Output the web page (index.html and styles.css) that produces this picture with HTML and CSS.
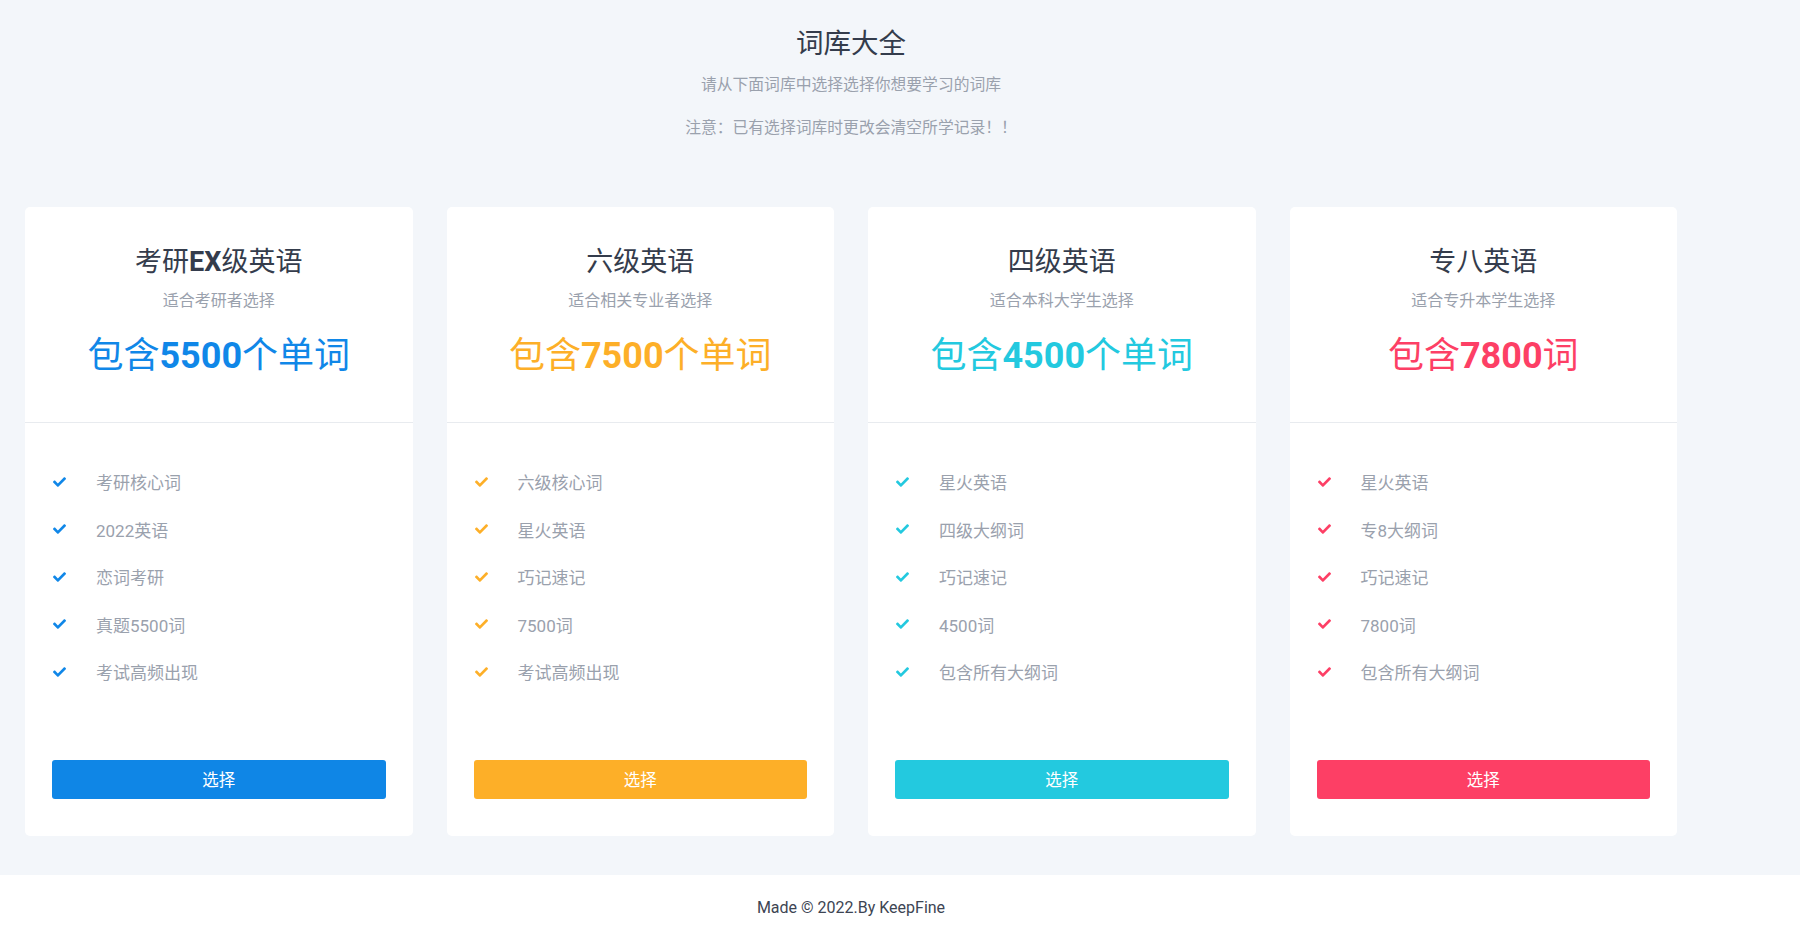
FILE: index.html
```html
<!DOCTYPE html>
<html lang="zh-CN">
<head>
<meta charset="utf-8">
<title>词库大全</title>
<link rel="stylesheet" href="styles.css">
</head>
<body>
<svg width="0" height="0" class="defs" aria-hidden="true">
  <symbol id="chk" viewBox="0 60 512 392">
    <path d="M173.9 439.4l-166.4-166.4c-10-10-10-26.2 0-36.2l36.2-36.2c10-10 26.2-10 36.2 0L192 312.7 432.1 72.6c10-10 26.2-10 36.2 0l36.2 36.2c10 10 10 26.2 0 36.2l-294.4 294.4c-10 10-26.2 10-36.2 0z"/>
  </symbol>
</svg>
<main class="main">
  <div class="wrap">
    <header class="head">
      <h1 class="head-title">词库大全</h1>
      <p class="head-sub">请从下面词库中选择选择你想要学习的词库</p>
      <p class="head-note">注意：已有选择词库时更改会清空所学记录！！</p>
    </header>
    <section class="cards">
      <div class="card blue">
        <div class="card-head">
          <h2 class="card-title">考研<span class="lat">EX</span>级英语</h2>
          <p class="card-sub">适合考研者选择</p>
          <p class="card-price">包含<span class="lat">5500</span>个单词</p>
        </div>
        <div class="card-body">
          <ul class="list">
            <li><svg class="ic"><use href="#chk"/></svg>考研核心词</li>
            <li><svg class="ic"><use href="#chk"/></svg>2022英语</li>
            <li><svg class="ic"><use href="#chk"/></svg>恋词考研</li>
            <li><svg class="ic"><use href="#chk"/></svg>真题5500词</li>
            <li><svg class="ic"><use href="#chk"/></svg>考试高频出现</li>
          </ul>
          <button class="btn">选择</button>
        </div>
      </div>
      <div class="card orange">
        <div class="card-head">
          <h2 class="card-title">六级英语</h2>
          <p class="card-sub">适合相关专业者选择</p>
          <p class="card-price">包含<span class="lat">7500</span>个单词</p>
        </div>
        <div class="card-body">
          <ul class="list">
            <li><svg class="ic"><use href="#chk"/></svg>六级核心词</li>
            <li><svg class="ic"><use href="#chk"/></svg>星火英语</li>
            <li><svg class="ic"><use href="#chk"/></svg>巧记速记</li>
            <li><svg class="ic"><use href="#chk"/></svg>7500词</li>
            <li><svg class="ic"><use href="#chk"/></svg>考试高频出现</li>
          </ul>
          <button class="btn">选择</button>
        </div>
      </div>
      <div class="card cyan">
        <div class="card-head">
          <h2 class="card-title">四级英语</h2>
          <p class="card-sub">适合本科大学生选择</p>
          <p class="card-price">包含<span class="lat">4500</span>个单词</p>
        </div>
        <div class="card-body">
          <ul class="list">
            <li><svg class="ic"><use href="#chk"/></svg>星火英语</li>
            <li><svg class="ic"><use href="#chk"/></svg>四级大纲词</li>
            <li><svg class="ic"><use href="#chk"/></svg>巧记速记</li>
            <li><svg class="ic"><use href="#chk"/></svg>4500词</li>
            <li><svg class="ic"><use href="#chk"/></svg>包含所有大纲词</li>
          </ul>
          <button class="btn">选择</button>
        </div>
      </div>
      <div class="card red">
        <div class="card-head">
          <h2 class="card-title">专八英语</h2>
          <p class="card-sub">适合专升本学生选择</p>
          <p class="card-price">包含<span class="lat">7800</span>词</p>
        </div>
        <div class="card-body">
          <ul class="list">
            <li><svg class="ic"><use href="#chk"/></svg>星火英语</li>
            <li><svg class="ic"><use href="#chk"/></svg>专8大纲词</li>
            <li><svg class="ic"><use href="#chk"/></svg>巧记速记</li>
            <li><svg class="ic"><use href="#chk"/></svg>7800词</li>
            <li><svg class="ic"><use href="#chk"/></svg>包含所有大纲词</li>
          </ul>
          <button class="btn">选择</button>
        </div>
      </div>
    </section>
  </div>
</main>
<footer class="foot">
  <div class="foot-in">Made © 2022.By KeepFine</div>
</footer>
</body>
</html>
```

FILE: styles.css
```css
* { box-sizing: border-box; }
html, body { margin: 0; padding: 0; }
body {
  font-family: "Roboto", "Noto Sans CJK SC", sans-serif;
  background: #ffffff;
  color: #343c4c;
}
.defs { position: absolute; width: 0; height: 0; overflow: hidden; }

.main {
  background: #f3f6fa;
  padding-bottom: 39px;
}
.wrap {
  width: 1652px;
  margin-left: 25px;
}

.head {
  padding-top: 26px;
  text-align: center;
}
.head-title {
  margin: 0;
  font-size: 27.5px;
  line-height: 36px;
  font-weight: 400;
  color: #343c4c;
}
.head-sub {
  margin: 11px 0 0;
  font-size: 15.8px;
  line-height: 24px;
  color: #9aa1ad;
}
.head-note {
  margin: 19px 0 0;
  font-size: 15.8px;
  line-height: 24px;
  color: #9aa1ad;
}

.cards {
  margin-top: 67px;
  display: grid;
  grid-template-columns: repeat(4, 1fr);
  column-gap: 34px;
}
.card {
  background: #ffffff;
  border-radius: 5px;
}
.card-head {
  padding: 37px 27px 42px;
  text-align: center;
  border-bottom: 1px solid #e8ebef;
}
.card-title {
  margin: 0;
  font-size: 27px;
  line-height: 36px;
  font-weight: 400;
  color: #343c4c;
}
.lat { font-weight: 700; }
.card-sub {
  margin: 9px 0 0;
  font-size: 16px;
  line-height: 24px;
  color: #9aa1ad;
}
.card-price {
  margin: 19px 0 0;
  font-size: 36px;
  line-height: 48px;
}
.card-body {
  padding: 35px 27px 37px;
}
.list {
  list-style: none;
  margin: 0;
  padding: 0;
}
.list li {
  display: flex;
  align-items: center;
  height: 47.5px;
  font-size: 17px;
  color: #9aa1ad;
}
.ic {
  width: 13px;
  height: 10px;
  margin-left: 1px;
  margin-right: 30px;
  flex: none;
}
.btn {
  display: block;
  width: 100%;
  height: 39px;
  margin-top: 64px;
  border: 0;
  border-radius: 3px;
  font-family: "Roboto", "Noto Sans CJK SC", sans-serif;
  font-size: 16.5px;
  color: #ffffff;
  cursor: pointer;
}

.blue .card-price, .blue .ic { color: #1087e8; fill: #1087e8; }
.blue .btn { background: #0f86e6; }
.orange .card-price, .orange .ic { color: #fdaf28; fill: #fdaf28; }
.orange .btn { background: #fdaf28; }
.cyan .card-price, .cyan .ic { color: #23c9df; fill: #23c9df; }
.cyan .btn { background: #23c9df; }
.red .card-price, .red .ic { color: #fd3f65; fill: #fd3f65; }
.red .btn { background: #fd3f65; }

.foot {
  background: #ffffff;
}
.foot-in {
  width: 1702px;
  height: 66px;
  line-height: 66px;
  text-align: center;
  font-size: 16px;
  color: #3d4553;
}
```
